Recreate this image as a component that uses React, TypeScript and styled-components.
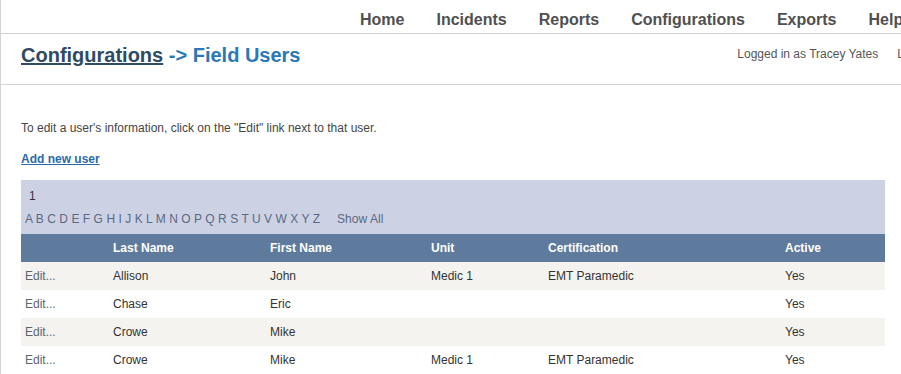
import React from 'react';
import styled, { createGlobalStyle } from 'styled-components';

const GlobalStyle = createGlobalStyle`
    body {
        margin: 0;
        background: #fff;
        font-family: Arial, "Liberation Sans", sans-serif;
        overflow: hidden;
    }
`

const Page = styled.div`
    width: 901px;
    min-height: 374px;
    border-left: 1px solid #d4d4d4;
    box-sizing: border-box;
`

const NavBar = styled.div`
    display: flex;
    gap: 32px;
    height: 34px;
    box-sizing: border-box;
    padding: 11px 0 0 359px;
    border-bottom: 1px solid #cfcfcf;
    white-space: nowrap;
    overflow: hidden;
`

const NavItem = styled.span`
    flex-shrink: 0;
    font-size: 16px;
    font-weight: bold;
    color: #505050;
    line-height: 18px;
`

const TitleRow = styled.div`
    display: flex;
    justify-content: space-between;
    height: 51px;
    box-sizing: border-box;
    padding: 9px 0 0 21px;
    border-bottom: 1px solid #d4d4d4;
    margin-left: -1px;
    white-space: nowrap;
    overflow: hidden;
`

const Title = styled.h1`
    margin: 0;
    font-size: 20px;
    line-height: 24px;
    font-weight: bold;
    color: #2a78b8;
`

const TitleLink = styled.a`
    color: #2f4b63;
    text-decoration: underline;
`

const UserInfo = styled.div`
    display: flex;
    flex-shrink: 0;
    gap: 19px;
    padding-top: 4px;
    margin-right: -33px;
    font-size: 12px;
    color: #555;
`

const Content = styled.div`
    padding: 36px 16px 0 20px;
`

const Hint = styled.p`
    margin: 0;
    font-size: 12px;
    color: #444;
    line-height: 14px;
`

const AddLink = styled.a`
    display: inline-block;
    margin-top: 17px;
    font-size: 12px;
    font-weight: bold;
    color: #2a6aa8;
    text-decoration: underline;
    line-height: 14px;
`

const FilterBox = styled.div`
    margin-top: 13px;
    height: 54px;
    box-sizing: border-box;
    padding: 9px 0 0 4px;
    background: #ccd2e3;
    font-size: 12px;
`

const PageNum = styled.div`
    padding-left: 4px;
    color: #333;
    line-height: 14px;
`

const Letters = styled.div`
    display: flex;
    margin-top: 9px;
    color: #5b6883;
    line-height: 14px;
    white-space: pre;
    letter-spacing: 0.05px;
`

const ShowAll = styled.span`
    margin-left: 17px;
`

const Row = styled.div<{ $head?: boolean; $alt?: boolean }>`
    display: grid;
    grid-template-columns: 88px 157px 161px 117px 237px 1fr;
    height: 28px;
    align-items: center;
    font-size: 12px;
    background: ${p => p.$head ? '#5e7a9d' : p.$alt ? '#f4f3f0' : '#fff'};
    color: ${p => p.$head ? '#fff' : '#333'};
    font-weight: ${p => p.$head ? 'bold' : 'normal'};
`

const Cell = styled.span`
    padding-left: 4px;
`

const EditLink = styled.a`
    padding-left: 4px;
    color: #5d6670;
`

const users = [
    { last: 'Allison', first: 'John', unit: 'Medic 1', cert: 'EMT Paramedic', active: 'Yes' },
    { last: 'Chase', first: 'Eric', unit: '', cert: '', active: 'Yes' },
    { last: 'Crowe', first: 'Mike', unit: '', cert: '', active: 'Yes' },
    { last: 'Crowe', first: 'Mike', unit: 'Medic 1', cert: 'EMT Paramedic', active: 'Yes' },
]

const navItems = ['Home', 'Incidents', 'Reports', 'Configurations', 'Exports', 'Help']

const App: React.FC = () => {
    const letters = 'ABCDEFGHIJKLMNOPQRSTUVWXYZ'.split('').join(' ')

    return (<React.Fragment>
        <GlobalStyle />
        <Page>
            <NavBar>
                {navItems.map((item) => (<NavItem key={item}>{item}</NavItem>))}
            </NavBar>
            <TitleRow>
                <Title><TitleLink>Configurations</TitleLink> -&gt; Field Users</Title>
                <UserInfo>
                    <span>Logged in as Tracey Yates</span>
                    <span>Logout</span>
                </UserInfo>
            </TitleRow>
            <Content>
                <Hint>To edit a user's information, click on the "Edit" link next to that user.</Hint>
                <AddLink>Add new user</AddLink>
                <FilterBox>
                    <PageNum>1</PageNum>
                    <Letters>{letters}<ShowAll>Show All</ShowAll></Letters>
                </FilterBox>
                <Row $head>
                    <Cell></Cell>
                    <Cell>Last Name</Cell>
                    <Cell>First Name</Cell>
                    <Cell>Unit</Cell>
                    <Cell>Certification</Cell>
                    <Cell>Active</Cell>
                </Row>
                {users.map((u, i) => (<Row key={i} $alt={i % 2 === 0}>
                    <EditLink>Edit...</EditLink>
                    <Cell>{u.last}</Cell>
                    <Cell>{u.first}</Cell>
                    <Cell>{u.unit}</Cell>
                    <Cell>{u.cert}</Cell>
                    <Cell>{u.active}</Cell>
                </Row>))}
            </Content>
        </Page>
    </React.Fragment>);
}

export default App;
